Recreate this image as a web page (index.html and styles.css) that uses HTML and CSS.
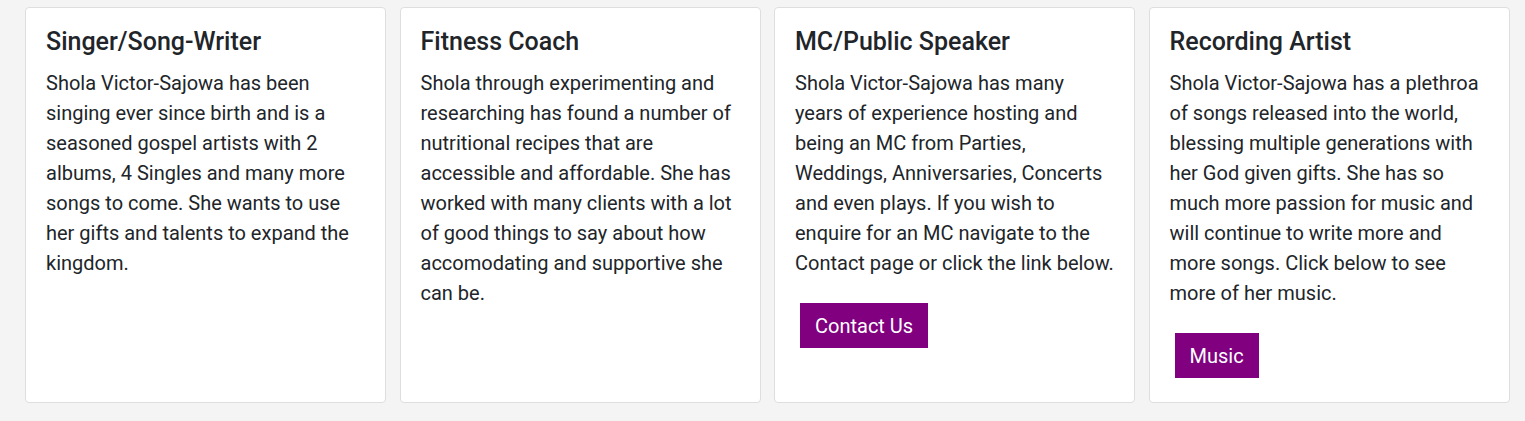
FILE: index.html
```html
<!DOCTYPE html>
<html lang="en">
<head>
<meta charset="utf-8">
<title>Services</title>
<link rel="stylesheet" href="styles.css">
</head>
<body>
<main class="services">
  <section class="card">
    <h5 class="card-title">Singer/Song-Writer</h5>
    <p class="card-text">Shola Victor-Sajowa has been singing ever since birth and is a seasoned gospel artists with 2 albums, 4 Singles and many more songs to come. She wants to use her gifts and talents to expand the kingdom.</p>
  </section>
  <section class="card">
    <h5 class="card-title">Fitness Coach</h5>
    <p class="card-text">Shola through experimenting and researching has found a number of nutritional recipes that are accessible and affordable. She has worked with many clients with a lot of good things to say about how accomodating and supportive she can be.</p>
  </section>
  <section class="card">
    <h5 class="card-title">MC/Public Speaker</h5>
    <p class="card-text">Shola Victor-Sajowa has many years of experience hosting and being an MC from Parties, Weddings, Anniversaries, Concerts and even plays. If you wish to enquire for an MC navigate to the Contact page or click the link below.</p>
    <a class="btn" href="#">Contact Us</a>
  </section>
  <section class="card">
    <h5 class="card-title">Recording Artist</h5>
    <p class="card-text">Shola Victor-Sajowa has a plethroa of songs released into the world, blessing multiple generations with her God given gifts. She has so much more passion for music and will continue to write more and more songs. Click below to see more of her music.</p>
    <a class="btn" href="#">Music</a>
  </section>
</main>
</body>
</html>
```
FILE: styles.css
```css
* { box-sizing: border-box; }
html, body {
  margin: 0;
  padding: 0;
  background: #f4f4f4;
  height: 421px;
  overflow: hidden;
}
body {
  font-family: Roboto, "Liberation Sans", Arial, sans-serif;
  font-size: 20px;
  line-height: 1.5;
  color: #212529;
}
.services {
  display: grid;
  grid-template-columns: repeat(4, 1fr);
  column-gap: 13.5px;
  padding: 7px 15.5px 0 25px;
  align-items: stretch;
  height: 403px;
}
.card {
  display: flex;
  flex-direction: column;
  align-items: flex-start;
  background: #fff;
  border: 1px solid #dedede;
  border-radius: 4px;
  padding: 19px 20px 19px;
}
.card-title {
  margin: 0 0 11px 0;
  font-size: 25px;
  font-weight: 500;
  line-height: 30px;
}
.card-text {
  margin: 0 0 20px 0;
  font-size: 20px;
  line-height: 30px;
}
.btn {
  display: inline-block;
  margin: 5px;
  padding: 7.5px 15px;
  background: #800080;
  color: #fff;
  font-size: 20px;
  line-height: 30px;
  text-decoration: none;
}
```
